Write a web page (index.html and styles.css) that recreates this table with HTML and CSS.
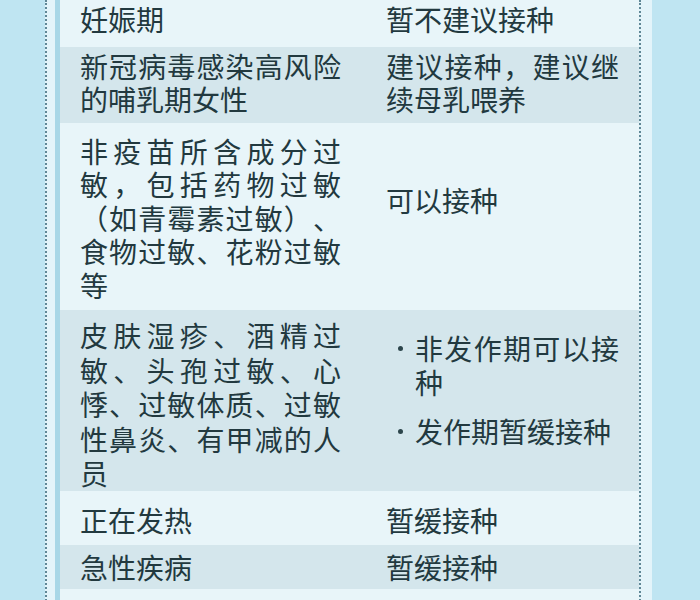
FILE: index.html
```html
<!DOCTYPE html>
<html lang="zh-CN">
<head>
<meta charset="utf-8">
<title>接种建议</title>
<link rel="stylesheet" href="styles.css">
</head>
<body>
<div class="paper">
  <div class="table">
    <div class="row light r1">
      <div class="cell left">妊娠期</div>
      <div class="cell right">暂不建议接种</div>
    </div>
    <div class="row dark r2">
      <div class="cell left">新冠病毒感染高风险的哺乳期女性</div>
      <div class="cell right">建议接种，建议继续母乳喂养</div>
    </div>
    <div class="row light r3">
      <div class="cell left">非疫苗所含成分过敏，包括药物过敏（如青霉素过敏）、食物过敏、花粉过敏等</div>
      <div class="cell right">可以接种</div>
    </div>
    <div class="row dark r4">
      <div class="cell left">皮肤湿疹、酒精过敏、头孢过敏、心悸、过敏体质、过敏性鼻炎、有甲减的人员</div>
      <div class="cell right">
        <ul class="bullets">
          <li>非发作期可以接种</li>
          <li>发作期暂缓接种</li>
        </ul>
      </div>
    </div>
    <div class="row light r5">
      <div class="cell left">正在发热</div>
      <div class="cell right">暂缓接种</div>
    </div>
    <div class="row dark r6">
      <div class="cell left">急性疾病</div>
      <div class="cell right">暂缓接种</div>
    </div>
    <div class="row light r7">
      <div class="cell left"></div>
      <div class="cell right"></div>
    </div>
  </div>
</div>
</body>
</html>
```

FILE: styles.css
```css
html, body {
  margin: 0;
  padding: 0;
}
body {
  background: #bfe5f2;
  height: 600px;
  overflow: hidden;
  font-family: "Noto Sans CJK SC", "Noto Sans", sans-serif;
  color: #22393f;
}
.paper {
  margin-left: 45px;
  width: 586px;
  padding: 0 11px 0 8px;
  border-left: 2px dotted #5f8796;
  background: #e3f4fa;
}
.table {
  display: flex;
  flex-direction: column;
  border-left: 5px solid #a8d7e7;
  border-right: 2px dotted #5f8796;
  background: #e3f4fa;
}
.row {
  display: grid;
  grid-template-columns: 306px 1fr;
  font-size: 28px;
  line-height: 33.5px;
  text-spacing-trim: space-all;
  font-feature-settings: "fwid" 1, "halt" 0, "chws" 0;
}
.light { background: #e8f5f9; }
.dark { background: #d4e6ec; }
.cell {
  text-align: justify;
}
.left {
  padding-left: 20px;
  padding-right: 25px;
}
.right {
  padding-left: 20px;
  padding-right: 20px;
}
.r1 .cell { padding-top: 3px; padding-bottom: 10px; }
.r2 .cell { padding-top: 3px; padding-bottom: 6px; }
.r3 .cell { padding-top: 12px; padding-bottom: 8px; }
.r3 .right { padding-top: 61px; }
.r4 { line-height: 34.5px; }
.r4 .cell { padding-top: 8px; padding-bottom: 0; }
.r4 .right { padding-top: 22px; }
.r5 .cell { padding-top: 13px; padding-bottom: 8px; }
.r6 .cell { padding-top: 6px; padding-bottom: 4px; }
.r7 { height: 60px; }
.bullets {
  list-style: none;
  margin: 0;
  padding: 0;
  line-height: 33.5px;
}
.bullets li {
  display: flex;
  text-align: justify;
}
.bullets li + li {
  margin-top: 16px;
}
.bullets li::before {
  content: "";
  flex: none;
  width: 5px;
  height: 5px;
  border-radius: 50%;
  background: #2c454b;
  margin: 14px 12px 0 12px;
}
```
